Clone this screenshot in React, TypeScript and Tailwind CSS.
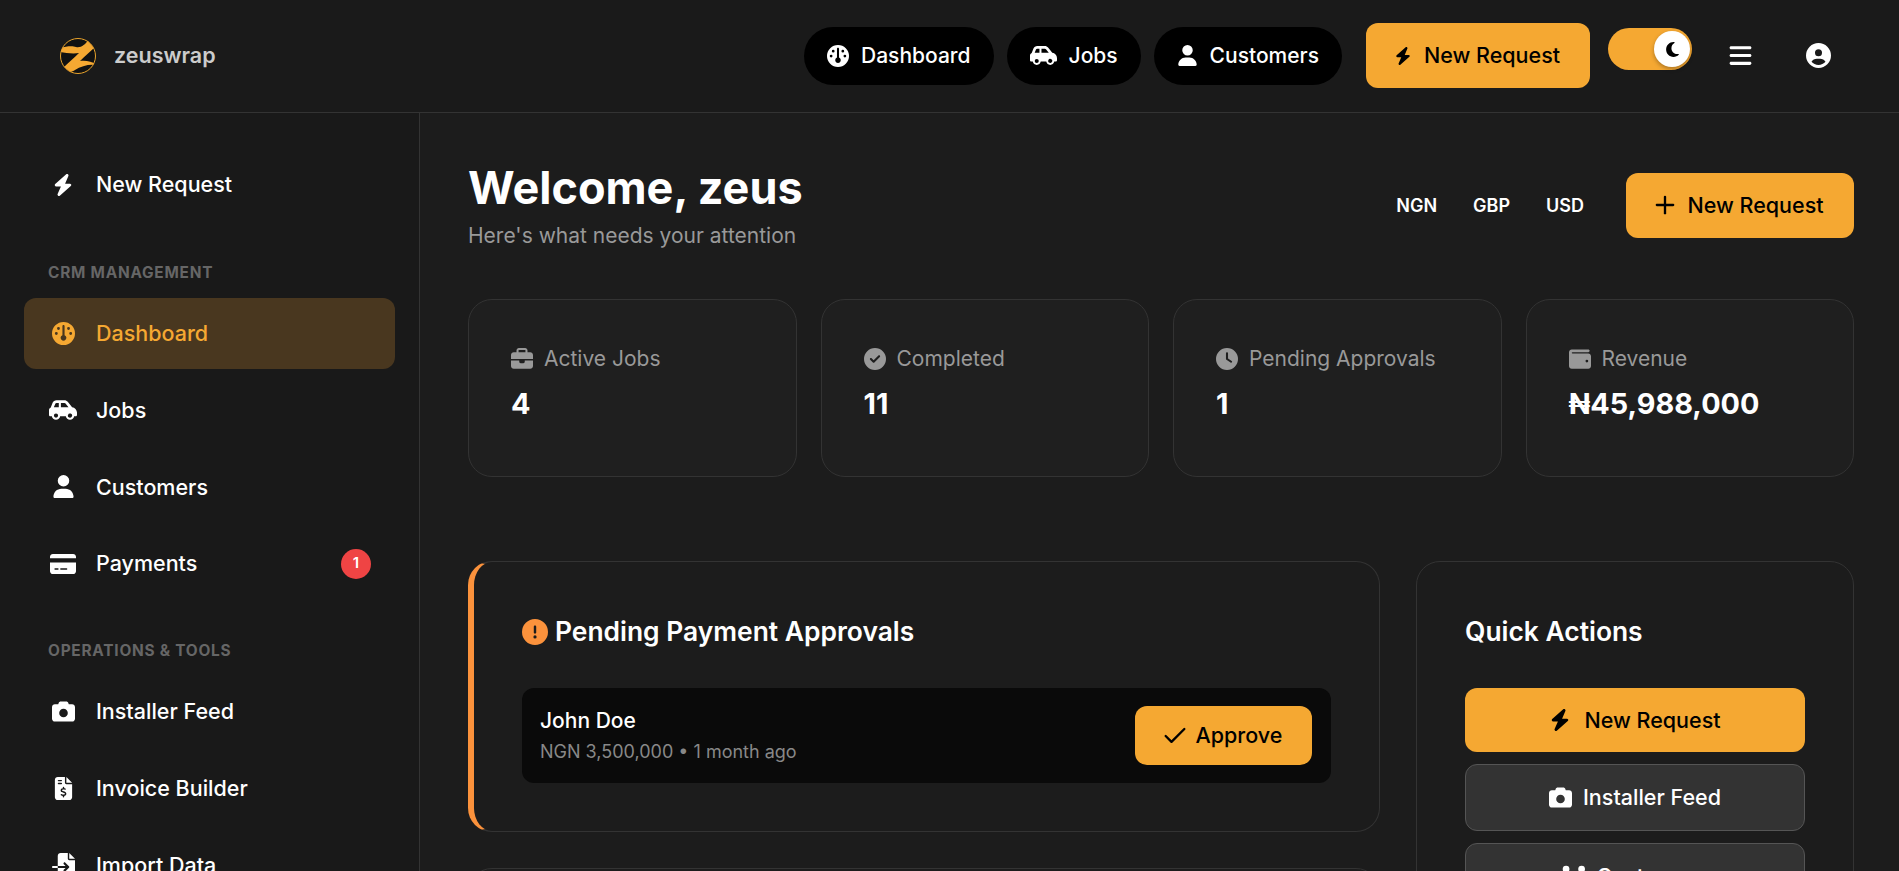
import type { ReactNode } from "react";
import { Check, Plus } from "lucide-react";
import {
  FaBars,
  FaBolt,
  FaBriefcase,
  FaCamera,
  FaCarSide,
  FaCircleCheck,
  FaCircleExclamation,
  FaCircleUser,
  FaClock,
  FaCreditCard,
  FaFileImport,
  FaFileInvoiceDollar,
  FaGauge,
  FaMoon,
  FaUser,
  FaUsers,
  FaWallet,
} from "react-icons/fa6";

const stats = [
  { label: "Active Jobs", value: "4", icon: <FaBriefcase size={22} /> },
  { label: "Completed", value: "11", icon: <FaCircleCheck size={22} /> },
  { label: "Pending Approvals", value: "1", icon: <FaClock size={22} /> },
  { label: "Revenue", value: "₦45,988,000", icon: <FaWallet size={22} /> },
];

function Logo() {
  return (
    <svg width="38" height="38" viewBox="0 0 38 38" className="shrink-0">
      <defs>
        <clipPath id="logo-clip">
          <circle cx="19" cy="19" r="17.5" />
        </clipPath>
      </defs>
      <circle cx="19" cy="19" r="17.5" fill="#111" stroke="#e8a32c" strokeWidth="1" />
      <g clipPath="url(#logo-clip)" fill="#f5a832">
        <path d="M1 11 C8 9 14 9 17 10 C22 11 26 8 30 2 L37 9 C32 14 26 19 21 24 C27 23 33 25 37 27 L37 28 C30 27 22 29 16 33 C12 36 8 35 4 31 C9 26 15 21 20 16 C14 17 7 16 1 15 Z" />
      </g>
    </svg>
  );
}

function NavPill({ icon, label }: { icon: ReactNode; label: string }) {
  return (
    <a className="flex h-[58px] items-center gap-[12px] rounded-full bg-black px-[23px] text-[21px] font-medium text-white">
      {icon}
      {label}
    </a>
  );
}

function SideItem({
  icon,
  label,
  active,
  badge,
}: {
  icon: ReactNode;
  label: string;
  active?: boolean;
  badge?: string;
}) {
  return (
    <a
      className={`flex h-[71px] shrink-0 items-center gap-[18px] rounded-[12px] px-[24px] text-[21.5px] font-medium ${
        active ? "bg-[#49371f] text-[#f5a832]" : "text-white"
      }`}
    >
      <span className="flex w-[30px] justify-center">{icon}</span>
      <span className="flex-1">{label}</span>
      {badge && (
        <span className="flex h-[30px] w-[30px] items-center justify-center rounded-full bg-[#ef4444] text-[15px] font-semibold text-white">
          {badge}
        </span>
      )}
    </a>
  );
}

function SideLabel({ children, first }: { children: ReactNode; first?: boolean }) {
  return (
    <div
      className={`mb-[8.6px] px-[24px] text-[15.4px] leading-[22px] font-bold tracking-[0.05em] text-[#666666] uppercase ${
        first ? "mt-[36px]" : "mt-[35px]"
      }`}
    >
      {children}
    </div>
  );
}

export default function App() {
  return (
    <div className="flex h-screen flex-col overflow-hidden bg-[#1c1c1c] font-['Inter',sans-serif] text-white">
      {/* Header */}
      <header className="flex h-[113px] shrink-0 items-center justify-between border-b border-[#333333] bg-[#1a1a1a] pr-[68px] pb-[1px] pl-[59px]">
        <div className="flex items-center gap-[17px]">
          <Logo />
          <span className="text-[21.5px] font-semibold text-[#cccccc]">zeuswrap</span>
        </div>
        <div className="flex items-center">
          <nav className="mr-[24px] flex items-center gap-[13px]">
            <NavPill icon={<FaGauge size={22} />} label="Dashboard" />
            <NavPill icon={<FaCarSide size={27} />} label="Jobs" />
            <NavPill icon={<FaUser size={21} />} label="Customers" />
          </nav>
          <button className="flex h-[65px] w-[224px] items-center justify-center gap-[12px] rounded-[12px] bg-[#f5a832] pr-[2px] text-[21.5px] font-medium text-black">
            <FaBolt size={18} />
            New Request
          </button>
          <div className="relative mr-[36px] mb-[13px] ml-[18px] h-[42px] w-[84px] rounded-full bg-[#f5a832]">
            <span className="absolute top-[3px] right-[2px] flex h-[36px] w-[36px] items-center justify-center rounded-full bg-white text-black shadow-[0_2px_4px_rgba(0,0,0,0.3)]">
              <FaMoon size={17} />
            </span>
          </div>
          <FaBars size={25} className="mr-[53px]" />
          <FaCircleUser size={25} />
        </div>
      </header>

      <div className="flex min-h-0 flex-1">
        {/* Sidebar */}
        <aside className="flex w-[420px] shrink-0 flex-col gap-[5.7px] overflow-hidden border-r border-[#333333] bg-[#191919] pt-[36px] pr-[24px] pl-[24px]">
          <SideItem icon={<FaBolt size={22} />} label="New Request" />
          <SideLabel first>CRM Management</SideLabel>
          <SideItem active icon={<FaGauge size={23} />} label="Dashboard" />
          <SideItem icon={<FaCarSide size={28} />} label="Jobs" />
          <SideItem icon={<FaUser size={23} />} label="Customers" />
          <SideItem icon={<FaCreditCard size={26} />} label="Payments" badge="1" />
          <SideLabel>Operations &amp; Tools</SideLabel>
          <SideItem icon={<FaCamera size={23} />} label="Installer Feed" />
          <SideItem icon={<FaFileInvoiceDollar size={23} />} label="Invoice Builder" />
          <SideItem icon={<FaFileImport size={23} />} label="Import Data" />
        </aside>

        {/* Main */}
        <main className="min-w-0 flex-1 overflow-hidden pt-[47px] pr-[45px] pl-[48px]">
          <div className="flex items-center justify-between">
            <div>
              <h1 className="text-[45px] leading-[56px] font-bold">Welcome, zeus</h1>
              <p className="mt-[6px] text-[21px] leading-[28px] text-[#999999]">Here's what needs your attention</p>
            </div>
            <div className="flex items-center">
              <div className="mr-[42px] flex gap-[36px] text-[18px] font-semibold">
                <span>NGN</span>
                <span>GBP</span>
                <span>USD</span>
              </div>
              <button className="flex h-[65px] w-[228px] items-center justify-center gap-[13px] rounded-[12px] bg-[#f5a832] text-[21.5px] font-medium text-black">
                <Plus size={28} strokeWidth={2} className="-mx-[5px]" />
                New Request
              </button>
            </div>
          </div>

          <div className="mt-[49px] grid grid-cols-4 gap-[24px]">
            {stats.map((s) => (
              <div key={s.label} className="h-[178px] rounded-[24px] border border-[#333333] bg-[#1f1f1f] px-[42px] pt-[45px]">
                <div className="flex items-center gap-[11px] text-[21px] leading-[28px] text-[#999999]">
                  {s.icon}
                  {s.label}
                </div>
                <div className="mt-[13px] text-[28.8px] leading-[36px] font-bold">{s.value}</div>
              </div>
            ))}
          </div>

          <div className="mt-[84px] grid grid-cols-[912px_438px] gap-[36px]">
            <div className="flex flex-col gap-[36px]">
              <section className="h-[271px] rounded-[24px] border border-l-[6px] border-[#333333] border-l-[#fb923c] bg-[#1c1c1c] px-[48px] pt-[48px]">
                <h2 className="flex h-[44px] items-center gap-[7px] text-[26.4px] font-semibold">
                  <FaCircleExclamation size={26} className="text-[#fb923c]" />
                  Pending Payment Approvals
                </h2>
                <div className="mt-[34px] flex h-[95px] items-center justify-between rounded-[12px] bg-[#0a0a0a] pr-[19px] pl-[18px]">
                  <div>
                    <div className="text-[21px] leading-[28px] font-medium">John Doe</div>
                    <div className="mt-[4px] text-[18px] leading-[26px] text-[#888888]">NGN 3,500,000 • 1 month ago</div>
                  </div>
                  <button className="flex h-[59px] w-[177px] items-center justify-center gap-[11px] rounded-[12px] bg-[#f5a832] text-[21.5px] font-medium text-black">
                    <Check size={28} strokeWidth={2} className="-mx-[4px]" />
                    Approve
                  </button>
                </div>
              </section>
              <section className="h-[200px] rounded-[24px] border border-[#333333] bg-[#1c1c1c]" />
            </div>

            <section className="rounded-[24px] border border-[#333333] bg-[#1c1c1c] px-[48px] pt-[48px]">
              <h2 className="flex h-[44px] items-center text-[26.4px] font-semibold">Quick Actions</h2>
              <div className="mt-[34px] flex flex-col gap-[12px]">
                <button className="flex h-[64px] items-center justify-center gap-[13px] rounded-[12px] bg-[#f5a832] text-[21.5px] font-medium text-black">
                  <FaBolt size={22} />
                  New Request
                </button>
                <button className="flex h-[67px] items-center justify-center gap-[11px] rounded-[12px] border border-[#555555] bg-[#333333] text-[21.5px] font-medium">
                  <FaCamera size={23} />
                  Installer Feed
                </button>
                <button className="flex h-[67px] items-center justify-center gap-[11px] rounded-[12px] border border-[#555555] bg-[#333333] text-[21.5px] font-medium">
                  <FaUsers size={27} className="-mx-[1.5px]" />
                  Customers
                </button>
              </div>
            </section>
          </div>
        </main>
      </div>
    </div>
  );
}
